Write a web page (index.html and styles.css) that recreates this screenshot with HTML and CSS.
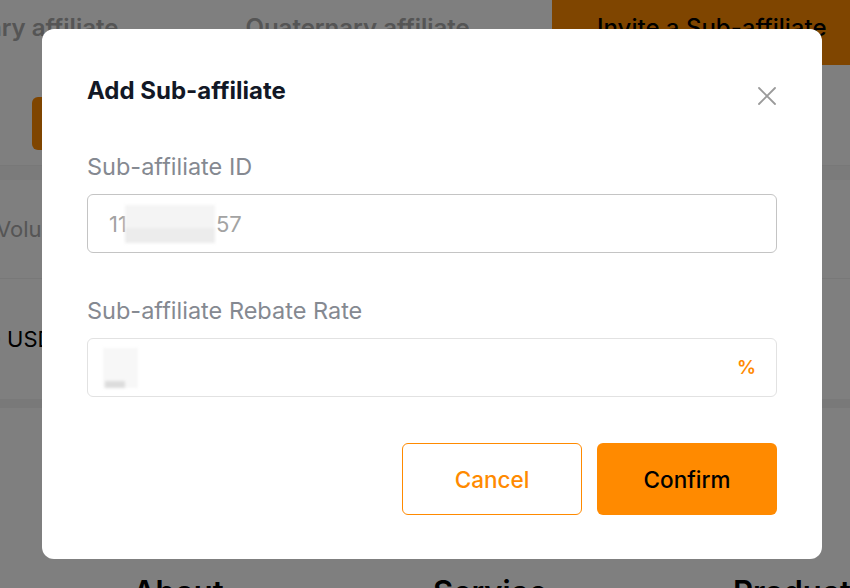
FILE: index.html
```html
<!DOCTYPE html>
<html lang="en">
<head>
<meta charset="utf-8">
<title>Add Sub-affiliate</title>
<link rel="stylesheet" href="styles.css">
</head>
<body>
<div class="page">
  <div class="tabbar">
    <div class="tabs">
      <span class="tab">Tertiary affiliate</span>
      <span class="tab">Quaternary affiliate</span>
    </div>
    <button class="invite">Invite a Sub-affiliate</button>
  </div>
  <div class="toolbar">
    <button class="tool-btn">Add</button>
  </div>
  <div class="table">
    <div class="thead"><span class="th">Volume</span></div>
    <div class="trow"><span class="td">0 USDT</span></div>
  </div>
  <div class="footer">
    <span class="fhead">About</span>
    <span class="fhead">Service</span>
    <span class="fhead">Products</span>
  </div>
</div>

<div class="overlay"></div>

<div class="modal" role="dialog" aria-labelledby="mtitle">
  <div class="modal-head">
    <h2 id="mtitle" class="modal-title">Add Sub-affiliate</h2>
    <button class="close" aria-label="Close">
      <svg viewBox="0 0 18 18" width="18" height="18"><path d="M1 1L17 17M17 1L1 17" stroke="#9a9a9a" stroke-width="1.8" fill="none" stroke-linecap="round"/></svg>
    </button>
  </div>
  <div class="field">
    <label class="label">Sub-affiliate ID</label>
    <div class="input input-active">
      <span class="val">11<span class="blur-id"></span>57</span>
    </div>
  </div>
  <div class="field">
    <label class="label">Sub-affiliate Rebate Rate</label>
    <div class="input">
      <span class="blur-rate"><span class="blur-rate-bar"></span></span>
      <span class="pct">%</span>
    </div>
  </div>
  <div class="actions">
    <button class="btn btn-cancel">Cancel</button>
    <button class="btn btn-confirm">Confirm</button>
  </div>
</div>
</body>
</html>
```
FILE: styles.css
```css
* { box-sizing: border-box; }
html, body { margin: 0; padding: 0; }
body {
  width: 850px;
  height: 588px;
  overflow: hidden;
  background: #fefefe;
  font-family: Inter, "Noto Sans", sans-serif;
}
button { font-family: inherit; cursor: pointer; }

/* underlying page */
.page { width: 850px; overflow: hidden; }
.tabbar {
  height: 65px;
  display: flex;
  background: #fbfbfb;
}
.tabs {
  flex: 0 0 auto;
  display: flex;
  gap: 127px;
  margin-left: -65px;
  width: 617px;
  background: #ffffff;
  overflow: hidden;
}
.tab {
  font-size: 24px;
  font-weight: 600;
  color: #aaaaaa;
  line-height: 56px;
  white-space: nowrap;
}
.invite {
  flex: 1;
  border: none;
  background: #ff8a00;
  color: #000;
  font-size: 24px;
  font-weight: 500;
  text-align: left;
  padding: 0 0 10px 45px;
  white-space: nowrap;
}
.toolbar { padding: 32px 0 15px 32px; }
.tool-btn {
  width: 150px;
  height: 53px;
  border: none;
  border-radius: 6px;
  background: #ff8a00;
  color: #fff;
  font-size: 20px;
}
.table { border-top: 1px solid #f0f0f0; }
.thead {
  height: 113px;
  border-bottom: 1px solid #f0f0f0;
  display: flex;
  align-items: center;
  padding-top: 14px;
  margin-left: -4px;
  background: linear-gradient(#f6f6f6 0 14px, #fefefe 14px);
}
.th { font-size: 22px; color: #aaaaaa; }
.trow {
  height: 120px;
  display: flex;
  align-items: center;
  margin-left: -13px;
}
.td { font-size: 22px; color: #000; }
.footer {
  border-top: 9px solid #f2f2f2;
  height: 200px;
  display: flex;
  padding: 165px 0 0 133px;
}
.fhead {
  flex: 0 0 300px;
  font-size: 31px;
  font-weight: 600;
  color: #000;
  white-space: nowrap;
}

.overlay {
  position: fixed;
  inset: 0;
  background: rgba(0, 0, 0, 0.5);
}

/* modal */
.modal {
  position: fixed;
  left: 42px;
  top: 29px;
  width: 780px;
  height: 530px;
  background: #fff;
  border-radius: 12px;
  padding: 47px 45px 44px;
  display: flex;
  flex-direction: column;
}
.modal-head {
  height: 30px;
  display: flex;
  justify-content: space-between;
  align-items: center;
  margin-bottom: 47px;
}
.modal-title {
  margin: 0;
  font-size: 24px;
  font-weight: 700;
  line-height: 30px;
  color: #121826;
}
.close {
  border: none;
  background: none;
  padding: 0;
  width: 18px;
  height: 18px;
  margin: 10px 1px 0 0;
  display: flex;
}
.field { display: flex; flex-direction: column; }
.field + .field { margin-top: 44px; }
.label {
  font-size: 23.5px;
  line-height: 28px;
  color: #858991;
  margin-bottom: 13px;
}
.input {
  height: 59px;
  border: 1px solid #e2e2e2;
  border-radius: 6px;
  display: flex;
  align-items: center;
  justify-content: space-between;
  padding: 0 20px 0 21px;
}
.input-active { border-color: #c4c4c4; }
.val {
  font-size: 22px;
  color: #a3a3a3;
  display: flex;
  align-items: center;
}
.blur-id {
  display: inline-block;
  width: 90px;
  height: 38px;
  margin: 0 1px 0 -2px;
  background: linear-gradient(#f4f4f4 0 60%, #ececec 60%);
  filter: blur(1.5px);
}
.blur-rate {
  display: inline-block;
  width: 35px;
  height: 40px;
  margin-left: -6px;
  background: #f7f7f7;
  position: relative;
  filter: blur(1.5px);
}
.blur-rate-bar {
  position: absolute;
  left: 2px;
  bottom: 0;
  width: 20px;
  height: 7px;
  background: #dcdcdc;
}
.pct {
  font-size: 19px;
  font-weight: 600;
  color: #ff8a00;
}
.actions {
  margin-top: 46px;
  display: flex;
  justify-content: flex-end;
  gap: 15px;
}
.btn {
  width: 180px;
  height: 72px;
  border-radius: 6px;
  font-size: 22.5px;
  font-weight: 500;
}
.btn-cancel {
  background: #fff;
  border: 1px solid #ff8a00;
  color: #ff8a00;
}
.btn-confirm {
  background: #ff8a00;
  border: none;
  color: #000;
}
```
